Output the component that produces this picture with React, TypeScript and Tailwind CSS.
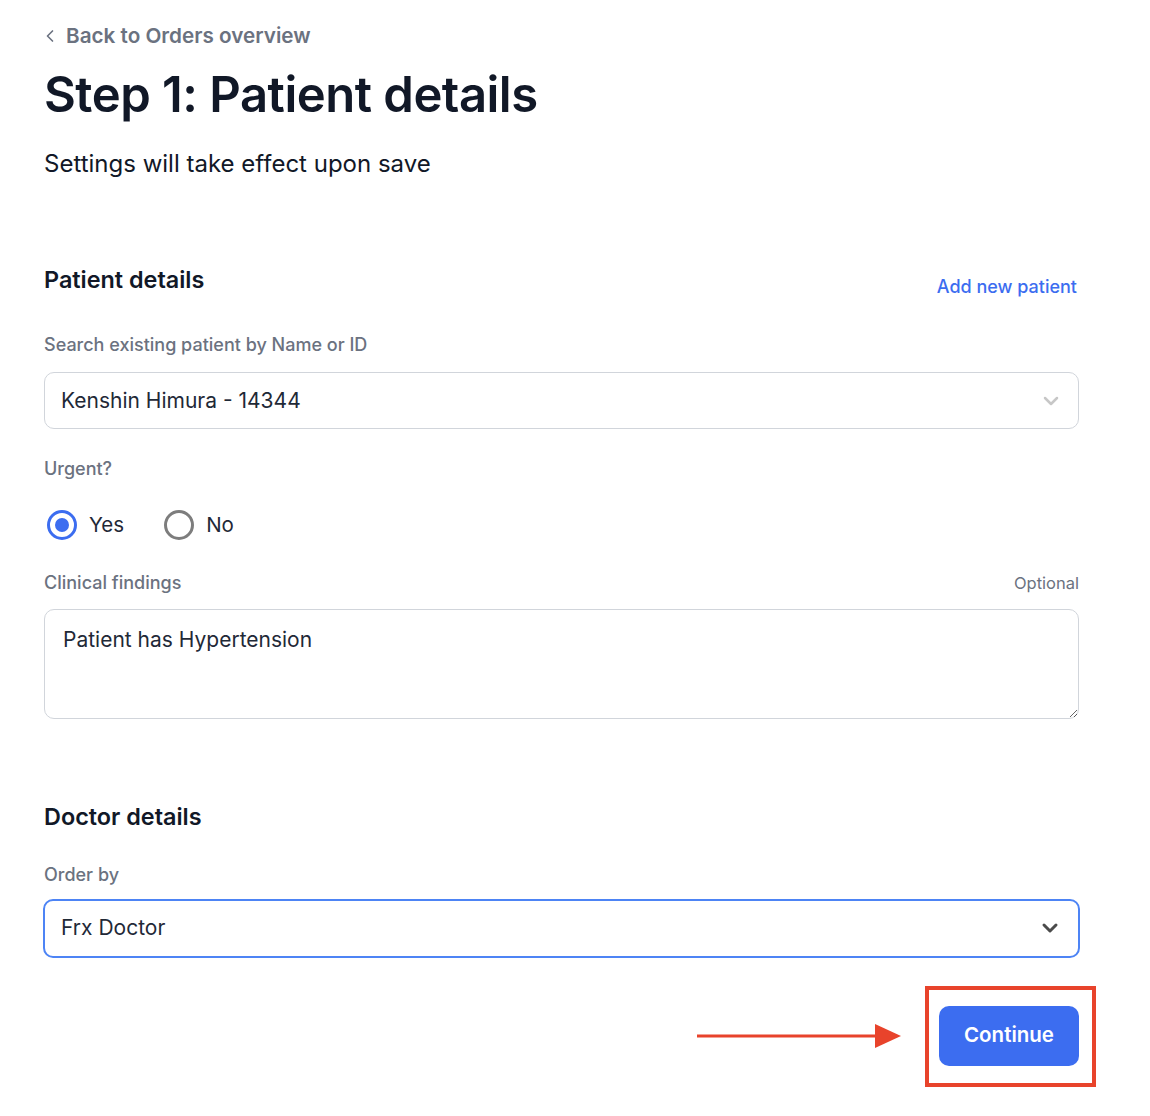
import React, { useState } from 'react';
import { ChevronLeft, ChevronDown } from 'lucide-react';

const Label = ({ children }: { children: React.ReactNode }) => (
  <p className="text-[18px] font-medium text-[#6b7280] leading-6">{children}</p>
);

const Radio = ({ checked, label, onClick }: { checked: boolean; label: string; onClick: () => void }) => (
  <button type="button" onClick={onClick} className="flex items-center gap-[12px]">
    {checked ? (
      <span className="w-[30px] h-[30px] rounded-full border-[3px] border-[#3c6df0] flex items-center justify-center">
        <span className="w-[14px] h-[14px] rounded-full bg-[#3c6df0]" />
      </span>
    ) : (
      <span className="w-[30px] h-[30px] rounded-full border-[3px] border-[#7d7d7d]" />
    )}
    <span className="text-[20.5px] text-[#1f2937]">{label}</span>
  </button>
);

const App = () => {
  const [urgent, setUrgent] = useState(true);

  return (
    <div className="min-h-screen bg-white" style={{ fontFamily: 'Inter, "Noto Sans", sans-serif' }}>
      <div className="ml-[44px] w-[1035px] pt-[22px]">
        <a href="#" className="flex items-center gap-[6px] text-[20.7px] font-semibold text-[#6b7280] leading-7">
          <ChevronLeft className="h-5 w-5 -ml-[4px]" strokeWidth={2} />
          Back to Orders overview
        </a>

        <h1 className="mt-[21px] text-[49px] leading-[48px] font-semibold text-[#111827] tracking-[-0.5px]">
          Step 1: Patient details
        </h1>
        <p className="mt-[28px] text-[24px] leading-[33px] text-[#111827]">Settings will take effect upon save</p>

        <div className="mt-[83px] flex items-end justify-between">
          <h2 className="text-[23.4px] leading-[33px] font-semibold text-[#111827]">Patient details</h2>
          <a href="#" className="text-[18px] font-medium text-[#3c6df0] leading-6 -mb-[3px] mr-[2px]">
            Add new patient
          </a>
        </div>

        <div className="mt-[37px]">
          <Label>Search existing patient by Name or ID</Label>
          <div className="mt-[15px] h-[57px] rounded-[10px] border border-[#d1d5db] flex items-center justify-between pl-[16px] pr-[15px]">
            <span className="text-[21px] text-[#1f2937]">Kenshin Himura - 14344</span>
            <ChevronDown className="h-6 w-6 text-[#c7c7c7]" strokeWidth={2.5} />
          </div>
        </div>

        <div className="mt-[28px]">
          <Label>Urgent?</Label>
          <div className="mt-[29px] flex items-center gap-[40px] pl-[3px]">
            <Radio checked={urgent} label="Yes" onClick={() => setUrgent(true)} />
            <Radio checked={!urgent} label="No" onClick={() => setUrgent(false)} />
          </div>
        </div>

        <div className="mt-[30px]">
          <div className="flex items-center justify-between">
            <Label>Clinical findings</Label>
            <span className="text-[16.5px] text-[#6b7280]">Optional</span>
          </div>
          <textarea
            defaultValue="Patient has Hypertension"
            className="mt-[13px] block w-full h-[110px] rounded-[10px] border border-[#d1d5db] px-[18px] py-[18px] text-[21px] text-[#1f2937] leading-6 outline-none"
          />
        </div>

        <h2 className="mt-[81px] text-[23.4px] leading-[33px] font-semibold text-[#111827]">Doctor details</h2>

        <div className="mt-[30px]">
          <Label>Order by</Label>
          <div className="mt-[12px] -mx-[1px] h-[59px] rounded-[10px] border-2 border-[#4d84f5] flex items-center justify-between pl-[16px] pr-[16px]">
            <span className="text-[21px] text-[#1f2937]">Frx Doctor</span>
            <ChevronDown className="h-6 w-6 text-[#4b4b4b]" strokeWidth={3} />
          </div>
        </div>

        <div className="mt-[28px] flex items-center justify-end -mr-[17px]">
          <svg width="206" height="26" viewBox="0 0 206 26" className="mr-[22px]">
            <line x1="0" y1="13" x2="184" y2="13" stroke="#e8432b" strokeWidth="3" />
            <polygon points="178,1 204,13 178,25" fill="#e8432b" />
          </svg>
          <div className="border-[4px] border-[#e8432b] pt-[16px] pb-[17px] pl-[10px] pr-[13px]">
            <button
              type="button"
              className="h-[60px] w-[140px] rounded-[10px] bg-[#3c6df0] text-white text-[20.5px] font-semibold"
            >
              Continue
            </button>
          </div>
        </div>
      </div>
    </div>
  );
};

export default App;
